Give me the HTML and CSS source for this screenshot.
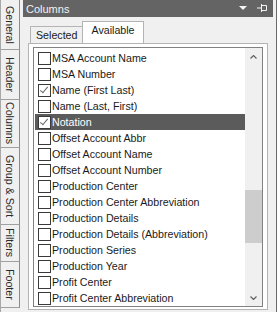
FILE: index.html
```html
<!DOCTYPE html>
<html lang="en">

<head>
    <meta charset="UTF-8">
    <title>Columns</title>
    <link rel="stylesheet" href="styles.css">
</head>

<body>
    <div class="window">
        <div class="side-tabs">
            <div class="side-tab general">General</div>
            <div class="side-tab header">Header</div>
            <div class="side-tab columns">Columns</div>
            <div class="side-tab group">Group &amp; Sort</div>
            <div class="side-tab filters">Filters</div>
            <div class="side-tab footer">Footer</div>
        </div>

        <div class="dock">
            <div class="dock-head">
                <span class="dock-title">Columns</span>
                <svg class="head-icon" width="8" height="5" viewBox="0 0 8 5">
                    <path d="M0 0 H8 L4 4 Z" fill="#f4f4f4"></path>
                </svg>
                <svg class="head-icon pin" width="10" height="8" viewBox="0 0 10 8">
                    <path d="M0 4 H4 M4.5 0 V8 M4.5 1.5 H9.5 V6.5 H4.5" stroke="#f4f4f4" stroke-width="1" fill="none"></path>
                </svg>
            </div>

            <div class="dock-body">
                <div class="tabs">
                    <div class="tab">Selected</div>
                    <div class="tab active">Available</div>
                </div>
                <div class="tab-page">
                    <div class="list">
                        <ul class="items">
                            <li><span class="check"></span>MSA Account Name</li>
                            <li><span class="check"></span>MSA Number</li>
                            <li><span class="check on"></span>Name (First Last)</li>
                            <li><span class="check"></span>Name (Last, First)</li>
                            <li class="selected"><span class="check on"></span>Notation</li>
                            <li><span class="check"></span>Offset Account Abbr</li>
                            <li><span class="check"></span>Offset Account Name</li>
                            <li><span class="check"></span>Offset Account Number</li>
                            <li><span class="check"></span>Production Center</li>
                            <li><span class="check"></span>Production Center Abbreviation</li>
                            <li><span class="check"></span>Production Details</li>
                            <li><span class="check"></span>Production Details (Abbreviation)</li>
                            <li><span class="check"></span>Production Series</li>
                            <li><span class="check"></span>Production Year</li>
                            <li><span class="check"></span>Profit Center</li>
                            <li><span class="check"></span>Profit Center Abbreviation</li>
                        </ul>
                        <div class="scrollbar">
                            <div class="arrow">
                                <svg width="7" height="4" viewBox="0 0 7 4">
                                    <path d="M0.5 3.5 L3.5 0.5 L6.5 3.5" stroke="#606060" stroke-width="1.2" fill="none"></path>
                                </svg>
                            </div>
                            <div class="track">
                                <div class="thumb"></div>
                            </div>
                            <div class="arrow down">
                                <svg width="7" height="4" viewBox="0 0 7 4">
                                    <path d="M0.5 0.5 L3.5 3.5 L6.5 0.5" stroke="#606060" stroke-width="1.2" fill="none"></path>
                                </svg>
                            </div>
                        </div>
                    </div>
                </div>
            </div>
        </div>

        <div class="edge"></div>
    </div>
</body>

</html>
```

FILE: styles.css
```css
body {
    margin: 0;
    font-family: 'Liberation Sans', Arial, sans-serif;
    background: #f0f0f0;
}

.window {
    display: flex;
    width: 277px;
    height: 312px;
    overflow: hidden;
}

/* vertical tabs on the left */
.side-tabs {
    display: flex;
    flex-direction: column;
    width: 19px;
    border-left: 1px solid #a8a8a8;
}

.side-tab {
    box-sizing: border-box;
    writing-mode: vertical-rl;
    font-size: 10.67px;
    line-height: 18px;
    color: #2a2a2a;
    text-align: center;
    background: #f0f0f0;
    border-right: 1px solid #8c8c8c;
    border-bottom: 1px solid #a0a0a0;
}

.side-tab.general { height: 50px; }
.side-tab.header { height: 50px; }
.side-tab.columns { height: 48px; }
.side-tab.group { height: 77px; }
.side-tab.filters { height: 37px; }
.side-tab.footer { height: 46px; }

/* docked panel */
.dock {
    display: flex;
    flex-direction: column;
    width: 250px;
    margin-left: 3px;
}

.dock-head {
    display: flex;
    align-items: center;
    height: 17px;
    padding: 0 6px 0 3px;
    background: #646464;
}

.dock-title {
    flex: 1;
    font-size: 11px;
    color: #f2f2f2;
}

.head-icon {
    margin-left: 10px;
}

.head-icon.pin {
    margin-top: -2px;
}

.dock-body {
    flex: 1;
    display: flex;
    flex-direction: column;
    padding: 6px 5px 2px 5px;
}

.tabs {
    display: flex;
    align-items: flex-end;
    padding-left: 2px;
    height: 20px;
    position: relative;
    z-index: 1;
}

.tab {
    height: 16px;
    padding: 0 5px;
    font-size: 10.67px;
    line-height: 17px;
    color: #1a1a1a;
    background: #f0f0f0;
    border: 1px solid #b4b4b4;
    border-bottom: none;
}

.tab.active {
    height: 21px;
    margin-left: -1px;
    padding: 0 8px;
    line-height: 17px;
    background: #fff;
}

.tab-page {
    flex: 1;
    display: flex;
    padding: 3px 4px 2px 4px;
    background: #fff;
    border: 1px solid #b4b4b4;
}

.list {
    flex: 1;
    display: flex;
    border: 1px solid #828282;
}

.items {
    flex: 1;
    margin: 0;
    padding: 2px 0 0 1px;
    list-style: none;
}

.items li {
    display: flex;
    align-items: center;
    height: 16px;
    padding-left: 3px;
    font-size: 10.67px;
    color: #1a1a1a;
    white-space: nowrap;
}

.items li.selected {
    background: #5b5b5b;
    color: #fff;
}

.check {
    box-sizing: border-box;
    flex: none;
    width: 13px;
    height: 13px;
    margin-right: 1px;
    border: 1px solid #3a3a3a;
    background: #fff;
    position: relative;
}

.check.on::after {
    content: "";
    position: absolute;
    left: 3px;
    top: 0px;
    width: 3px;
    height: 7px;
    border: solid #666;
    border-width: 0 1px 1px 0;
    transform: rotate(40deg);
}

.scrollbar {
    display: flex;
    flex-direction: column;
    width: 17px;
    background: #f0f0f0;
}

.arrow {
    display: flex;
    align-items: center;
    justify-content: center;
    height: 17px;
}

.track {
    flex: 1;
    padding-top: 125px;
}

.thumb {
    height: 53px;
    background: #cdcdcd;
}

.edge {
    width: 1px;
    margin-left: 3px;
    background: #6a6a6a;
}
```
